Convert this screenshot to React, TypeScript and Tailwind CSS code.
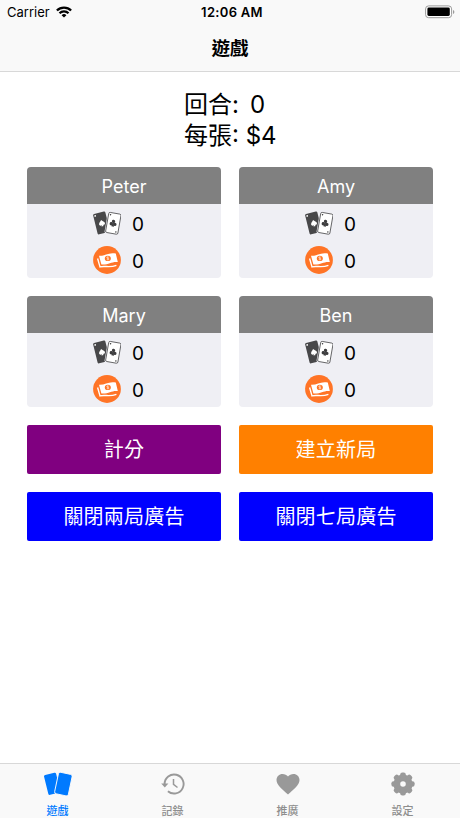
import { useState } from "react";

const players = [
  { name: "Peter", cards: 0, money: 0 },
  { name: "Amy", cards: 0, money: 0 },
  { name: "Mary", cards: 0, money: 0 },
  { name: "Ben", cards: 0, money: 0 },
];

const actions = [
  { label: "計分", color: "bg-[#800080]" },
  { label: "建立新局", color: "bg-[#ff8000]" },
  { label: "關閉兩局廣告", color: "bg-[#0000ff]" },
  { label: "關閉七局廣告", color: "bg-[#0000ff]" },
];

function WifiIcon() {
  return (
    <svg width="16" height="12" viewBox="0 0 16 12" fill="none" stroke="#000" strokeWidth="2.3">
      <path d="M.9 4.5a10 10 0 0 1 14.2 0" />
      <path d="M3.5 7.3a6.4 6.4 0 0 1 9 0" />
      <path d="M8 11.5 5.6 9.2a3.4 3.4 0 0 1 4.8 0Z" fill="#000" stroke="none" />
    </svg>
  );
}

function BatteryIcon() {
  return (
    <svg width="30" height="14" viewBox="0 0 30 14">
      <rect x="0.6" y="0.9" width="26" height="11.8" rx="3" fill="#fff" stroke="#9a9a9a" />
      <rect x="2.4" y="2.6" width="22.4" height="8.4" rx="1.4" fill="#000" />
      <path d="M28 5v4q1.4-.6 1.4-2T28 5Z" fill="#9a9a9a" />
    </svg>
  );
}

const spade = "M0-3.3C1-1.9 3-.9 3 .6c0 1.5-1.7 1.9-2.5.9L1.1 3h-2.2l.6-1.5C-1.3 2.5-3 2.1-3 .6c0-1.5 2-2.5 3-3.9Z";

function CardsIcon() {
  return (
    <svg width="28" height="24" viewBox="0 0 28 24">
      <g transform="translate(7.8 12.1) rotate(-14)">
        <rect x="-5.6" y="-10.5" width="12.6" height="21" rx="1.3" fill="#474749" />
        <circle cx="-3.7" cy="-8.3" r="0.9" fill="#fff" />
        <path d={spade} transform="translate(1 .4)" fill="#fff" />
      </g>
      <g transform="translate(20.2 12.3) rotate(10)">
        <rect x="-7.1" y="-11" width="14" height="22" rx="1.6" fill="#efeff4" />
        <rect x="-6.1" y="-10.2" width="12.4" height="20.4" rx="1.4" fill="#fff" stroke="#4c4c4e" strokeWidth="0.8" />
        <g fill="#3d3d3f">
          <circle cx="0" cy="-1.9" r="1.7" />
          <circle cx="-1.8" cy="0.8" r="1.7" />
          <circle cx="1.8" cy="0.8" r="1.7" />
          <path d="M-.5-.8h1l.8 4h-2.6Z" />
          <circle cx="-4.1" cy="-8" r="0.75" />
          <circle cx="4.1" cy="8" r="0.75" />
        </g>
      </g>
    </svg>
  );
}

function MoneyIcon() {
  return (
    <svg width="28" height="28" viewBox="0 0 28 28">
      <circle cx="14" cy="14" r="13.9" fill="#ff7426" />
      <path d="M4.6 12.5 7 20.9c5-1.6 9 1.4 16.4-1.6" fill="none" stroke="#fff" strokeWidth="1.4" />
      <path d="M6 9.8C12 10.3 15.500 6 22.800 7.600l2 8.500c-6-.9-9.500 3.200-16.400 2.400Z" fill="#fff" />
      <ellipse cx="14.8" cy="12.4" rx="3" ry="2.6" fill="#ff7426" />
      <path
        d="M16 11.4c-.9-.8-2.4-.5-2.3.3.2.9 2.2.4 2.3 1.3 0 .8-1.4 1.1-2.3.3m.9-2.7.4 3.6"
        fill="none" stroke="#fff" strokeWidth="0.5"
      />
    </svg>
  );
}

function GameIcon() {
  return (
    <svg width="28" height="24" viewBox="0 0 28 24" fill="#007aff">
      <rect x="-6.2" y="-10.2" width="12.4" height="20.4" rx="1.5" transform="translate(8.2 11.8) rotate(-14)" />
      <rect
        x="-7" y="-11" width="14" height="22" rx="2"
        stroke="#f9f9f9" strokeWidth="0.9"
        transform="translate(19.4 12.1) rotate(12)"
      />
    </svg>
  );
}

function HistoryIcon() {
  return (
    <svg width="24" height="24" viewBox="0 0 24 24" fill="none" stroke="#999" strokeWidth="1.9">
      <path d="M3.6 12a9.5 9.5 0 1 1 3.3 7.2" />
      <path d="M.2 11.6h7.2L3.8 15.4Z" fill="#999" stroke="none" />
      <path d="M12.5 7v5.3l4 3.2" strokeWidth="1.5" />
    </svg>
  );
}

function HeartIcon() {
  return (
    <svg width="24" height="24" viewBox="0 0 24 24" fill="#999">
      <path d="M12 22.5C5.8 16.9.5 13.1.5 8.1.5 4.4 3.2 1.9 6.5 1.9c2.2 0 4.3 1 5.5 2.7 1.2-1.7 3.3-2.7 5.5-2.7 3.3 0 6 2.5 6 6.2 0 5-5.3 8.8-11.5 14.4Z" />
    </svg>
  );
}

function SettingsIcon() {
  return (
    <svg width="24" height="24" viewBox="0 0 24 24" fill="#999">
      <circle cx="12" cy="12" r="6.2" fill="none" stroke="#999" strokeWidth="6.8" />
      {[0, 45, 90, 135, 180, 225, 270, 315].map((angle) => (
        <rect key={angle} x="9.2" y="0.4" width="5.6" height="6" rx="2.1" transform={`rotate(${angle} 12 12)`} />
      ))}
    </svg>
  );
}

const tabs = [
  { label: "遊戲", icon: GameIcon },
  { label: "記錄", icon: HistoryIcon },
  { label: "推廣", icon: HeartIcon },
  { label: "設定", icon: SettingsIcon },
];

export default function App() {
  const [activeTab, setActiveTab] = useState("遊戲");

  return (
    <div className="flex h-screen w-full flex-col bg-white text-black font-[Inter,'Noto_Sans_CJK_TC',sans-serif]">
      <header className="h-[72px] shrink-0 border-b border-[#d8d8d8] bg-[#f9f9f9]">
        <div className="grid h-6 grid-cols-3 items-center pl-[7px] pr-[5px] text-[13px]">
          <div className="flex items-center gap-[6px]">
            <span className="pt-px">Carrier</span>
            <WifiIcon />
          </div>
          <span className="pl-[2px] pt-px text-center font-semibold tracking-[0.3px]">12:06 AM</span>
          <div className="flex justify-end">
            <BatteryIcon />
          </div>
        </div>
        <h1 className="flex h-[47px] items-center justify-center pt-[2px] text-[18.5px] font-bold">遊戲</h1>
      </header>

      <main className="flex-1 px-[27px] pt-[17px]">
        <div className="mx-auto h-[78px] w-[92px] whitespace-pre text-2xl leading-[31px]">
          <p>回合:<span className="pl-[11px]">0</span></p>
          <p>每張: $4</p>
        </div>

        <div className="grid grid-cols-2 gap-[18px]">
          {players.map((player) => (
            <section key={player.name} className="h-[111px] overflow-hidden rounded-[4px] bg-[#efeff4]">
              <h2 className="flex h-[37px] items-center justify-center bg-[#808080] pt-[2px] text-[18px] text-white">
                {player.name}
              </h2>
              <div className="flex h-[37px] items-center gap-[11px] pl-[66px] text-[19px]">
                <CardsIcon />
                <span className="pt-[6px]">{player.cards}</span>
              </div>
              <div className="flex h-[37px] items-center gap-[11px] pl-[66px] text-[19px]">
                <MoneyIcon />
                <span className="pt-[6px]">{player.money}</span>
              </div>
            </section>
          ))}
        </div>

        <div className="mt-[18px] grid grid-cols-2 gap-x-[18px] gap-y-[17.5px]">
          {actions.map((action) => (
            <button
              key={action.label}
              className={`h-[49px] rounded-[2px] pt-px text-xl tracking-[0.2px] text-white ${action.color}`}
            >
              {action.label}
            </button>
          ))}
        </div>
      </main>

      <nav className="grid h-[55px] shrink-0 grid-cols-4 border-t border-[#d8d8d8] bg-[#f9f9f9]">
        {tabs.map(({ label, icon: Icon }) => (
          <button
            key={label}
            onClick={() => setActiveTab(label)}
            className={`flex flex-col items-center pt-[8px] text-[11px] font-medium leading-[16px] ${
              activeTab === label ? "text-[#007aff]" : "text-[#8e8e8e]"
            }`}
          >
            <Icon />
            <span className="pt-[7px]">{label}</span>
          </button>
        ))}
      </nav>
    </div>
  );
}
